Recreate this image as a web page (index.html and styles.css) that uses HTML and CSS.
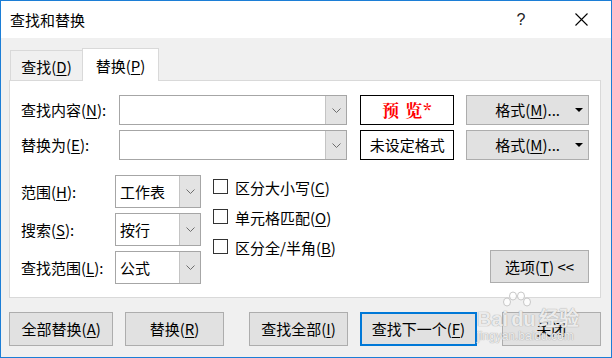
FILE: index.html
```html
<!DOCTYPE html>
<html lang="zh-CN">
<head>
  <meta charset="UTF-8">
  <title>查找和替换</title>
  <link rel="stylesheet" href="styles.css">
</head>
<body>
  <div class="dialog">
    <div class="titlebar">
      <span class="title">查找和替换</span>
      <span class="help">?</span>
      <span class="close">
        <svg width="13" height="13" viewBox="0 0 13 13"><path d="M0.5 0.5 L12.5 12.5 M12.5 0.5 L0.5 12.5" stroke="#000" stroke-width="1.1" fill="none"/></svg>
      </span>
    </div>

    <div class="content">
      <div class="tabs">
        <div class="tab">查找(<u>D</u>)</div>
        <div class="tab active">替换(<u>P</u>)</div>
      </div>

      <div class="panel">
        <div class="field-row">
          <span class="field-label">查找内容(<u>N</u>):</span>
          <div class="combo">
            <span class="combo-text"></span>
            <span class="drop"><svg width="9" height="5" viewBox="0 0 9 5"><polyline points="0.5,0.5 4.5,4.5 8.5,0.5" stroke="#6d6d6d" fill="none"/></svg></span>
          </div>
          <div class="preview red">预&nbsp;览*</div>
          <button class="btn format">格式(<u>M</u>)...<span class="caret"></span></button>
        </div>
        <div class="field-row">
          <span class="field-label">替换为(<u>E</u>):</span>
          <div class="combo">
            <span class="combo-text"></span>
            <span class="drop"><svg width="9" height="5" viewBox="0 0 9 5"><polyline points="0.5,0.5 4.5,4.5 8.5,0.5" stroke="#6d6d6d" fill="none"/></svg></span>
          </div>
          <div class="preview">未设定格式</div>
          <button class="btn format">格式(<u>M</u>)...<span class="caret"></span></button>
        </div>

        <div class="options">
          <div class="scope">
            <div class="scope-row">
              <span class="scope-label">范围(<u>H</u>):</span>
              <div class="select">
                <span class="select-text">工作表</span>
                <span class="drop"><svg width="9" height="5" viewBox="0 0 9 5"><polyline points="0.5,0.5 4.5,4.5 8.5,0.5" stroke="#6d6d6d" fill="none"/></svg></span>
              </div>
            </div>
            <div class="scope-row">
              <span class="scope-label">搜索(<u>S</u>):</span>
              <div class="select">
                <span class="select-text">按行</span>
                <span class="drop"><svg width="9" height="5" viewBox="0 0 9 5"><polyline points="0.5,0.5 4.5,4.5 8.5,0.5" stroke="#6d6d6d" fill="none"/></svg></span>
              </div>
            </div>
            <div class="scope-row">
              <span class="scope-label">查找范围(<u>L</u>):</span>
              <div class="select">
                <span class="select-text">公式</span>
                <span class="drop"><svg width="9" height="5" viewBox="0 0 9 5"><polyline points="0.5,0.5 4.5,4.5 8.5,0.5" stroke="#6d6d6d" fill="none"/></svg></span>
              </div>
            </div>
          </div>

          <div class="checks">
            <div class="check"><span class="box"></span>区分大小写(<u>C</u>)</div>
            <div class="check"><span class="box"></span>单元格匹配(<u>O</u>)</div>
            <div class="check"><span class="box"></span>区分全/半角(<u>B</u>)</div>
          </div>

          <button class="btn toggle">选项(<u>T</u>) &lt;&lt;</button>
        </div>
      </div>

      <div class="actions">
        <button class="btn act w105">全部替换(<u>A</u>)</button>
        <button class="btn act w99 gap-s">替换(<u>R</u>)</button>
        <button class="btn act w100 gap-l">查找全部(<u>I</u>)</button>
        <button class="btn act w117 gap-s default">查找下一个(<u>F</u>)</button>
        <button class="btn act w100 gap-l">关闭</button>
      </div>

      <div class="watermark">
        <svg class="wm-paw" width="30" height="18" viewBox="0 0 30 18">
          <g fill="rgba(255,255,255,0.8)" stroke="#c8c8c8">
            <ellipse cx="5" cy="11" rx="3.5" ry="4"/>
            <ellipse cx="11" cy="5" rx="3.5" ry="4"/>
            <ellipse cx="19" cy="5" rx="3.5" ry="4"/>
            <ellipse cx="25" cy="11" rx="3.5" ry="4"/>
          </g>
        </svg>
        <span class="wm-logo">Bai<span class="wm-du">du</span>经验</span>
        <span class="wm-url">jingyan.baidu.com</span>
      </div>
    </div>
  </div>
</body>
</html>
```

FILE: styles.css
```css
* {
  margin: 0;
  padding: 0;
  box-sizing: border-box;
}

body {
  font-family: "Noto Sans CJK SC", "Noto Sans", sans-serif;
  font-size: 15px;
  line-height: 20px;
  color: #000;
  background: #f0f0f0;
}

u {
  text-decoration: underline;
  text-underline-offset: 2px;
}

.dialog {
  position: relative;
  width: 612px;
  height: 358px;
  border: 1px solid #1c7ed6;
  background: #f0f0f0;
  overflow: hidden;
}

/* title bar */
.titlebar {
  height: 37px;
  background: #fff;
  display: flex;
  align-items: center;
  padding-left: 9px;
}

.title {
  flex: 1;
}

.help {
  width: 20px;
  text-align: center;
  margin-right: 44px;
  font-family: "Liberation Sans", sans-serif;
  font-size: 16px;
  color: #222;
}

.close {
  display: flex;
  margin-right: 23px;
}

/* body */
.content {
  padding: 10px 10px 0 8px;
}

.tabs {
  display: flex;
  align-items: flex-end;
  padding-left: 1px;
  height: 32px;
}

.tab {
  width: 72px;
  height: 30px;
  padding-top: 6px;
  text-align: center;
  border: 1px solid #d9d9d9;
  border-right: none;
  border-bottom: none;
}

.tab.active {
  width: 77px;
  height: 33px;
  padding-top: 7px;
  background: #fff;
  border-right: 1px solid #d9d9d9;
  margin-bottom: -1px;
  position: relative;
}

.panel {
  background: #fff;
  border: 1px solid #d9d9d9;
  padding: 14px 11px 13px 11px;
}

.field-row {
  display: flex;
  align-items: center;
  height: 30px;
}

.field-row + .field-row {
  margin-top: 5px;
}

.field-label {
  width: 98px;
}

.combo {
  width: 229px;
  height: 30px;
  display: flex;
  border: 1px solid #a6a6a6;
  background: #fff;
}

.combo-text,
.select-text {
  flex: 1;
}

.drop {
  width: 21px;
  display: flex;
  align-items: center;
  justify-content: center;
  background: #e3e3e3;
  border-left: 1px solid #c4c4c4;
}

.preview {
  width: 94px;
  height: 30px;
  margin-left: 13px;
  border: 1px solid #000;
  display: flex;
  align-items: center;
  justify-content: center;
}

.preview.red {
  color: #f00;
  font-weight: bold;
  font-size: 17px;
  letter-spacing: 1px;
  font-family: "Noto Serif CJK SC", "Noto Sans CJK SC", serif;
}

.btn {
  font: inherit;
  color: #000;
  background: #e1e1e1;
  border: 1px solid #adadad;
  cursor: default;
}

.format {
  position: relative;
  width: 123px;
  height: 30px;
  margin-left: 12px;
  text-align: center;
}

.caret {
  position: absolute;
  right: 5px;
  top: 12px;
  border-left: 4px solid transparent;
  border-right: 4px solid transparent;
  border-top: 4px solid #000;
}

/* scope + checkboxes */
.options {
  display: flex;
  margin-top: 15px;
}

.scope-row {
  display: flex;
  align-items: center;
  height: 33px;
}

.scope-row + .scope-row {
  margin-top: 5px;
}

.scope-label {
  width: 94px;
}

.select {
  width: 86px;
  height: 33px;
  display: flex;
  border: 1px solid #a6a6a6;
}

.select-text {
  padding-left: 4px;
  line-height: 31px;
}

.checks {
  margin-left: 12px;
  margin-top: -2px;
}

.check {
  height: 30px;
  display: flex;
  align-items: center;
}

.box {
  width: 15px;
  height: 15px;
  border: 1px solid #333;
  background: #fff;
  margin-right: 7px;
  margin-top: -3px;
}

.toggle {
  width: 99px;
  height: 33px;
  margin-left: auto;
  align-self: flex-end;
  margin-bottom: 1px;
}

/* bottom buttons */
.actions {
  display: flex;
  margin-top: 14px;
}

.act {
  height: 34px;
}

.w105 { width: 105px; }
.w99 { width: 99px; }
.w100 { width: 100px; }
.w117 { width: 117px; }

.gap-s { margin-left: 12px; }
.gap-l { margin-left: 25px; }

.act.default {
  border: 2px solid #0078d7;
}

/* watermark overlay */
.watermark {
  position: absolute;
  left: 476px;
  top: 290px;
  display: flex;
  flex-direction: column;
  color: rgba(255, 255, 255, 0.8);
  text-shadow: 0 0 1px #a8a8a8, 0 0 1px #a8a8a8;
  pointer-events: none;
}

.wm-paw {
  margin-left: 25px;
}

.wm-logo {
  font-family: "Liberation Sans", sans-serif;
  font-weight: bold;
  font-size: 20px;
  line-height: 20px;
  white-space: nowrap;
}

.wm-du {
  margin: 0 3px;
}

.wm-url {
  font-family: "Liberation Sans", sans-serif;
  font-size: 12px;
  line-height: 14px;
}
```
